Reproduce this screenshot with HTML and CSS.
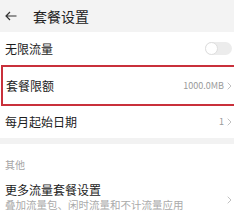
FILE: index.html
```html
<!DOCTYPE html>
<html lang="zh">
<head>
<meta charset="utf-8">
<link rel="stylesheet" href="styles.css">
</head>
<body>
<div class="screen">
  <header class="topbar">
    <svg class="back" width="12" height="10" viewBox="0 0 12 10"><path d="M11.5 5H1M5 1 1 5l4 4" fill="none" stroke="#333" stroke-width="1.2"/></svg>
    <span class="title">套餐设置</span>
  </header>
  <div class="row r1">
    <span class="label">无限流量</span>
    <span class="toggle"><span class="knob"></span></span>
  </div>
  <div class="row r2 marked">
    <span class="label">套餐限额</span>
    <span class="value">1000.0MB<svg class="chev" width="5" height="8" viewBox="0 0 5 8"><path d="M0.7 0.7 4 4 0.7 7.3" fill="none" stroke="#bbb" stroke-width="0.9"/></svg></span>
  </div>
  <div class="row r3">
    <span class="label">每月起始日期</span>
    <span class="value">1<svg class="chev" width="5" height="8" viewBox="0 0 5 8"><path d="M0.7 0.7 4 4 0.7 7.3" fill="none" stroke="#bbb" stroke-width="0.9"/></svg></span>
  </div>
  <div class="band"></div>
  <div class="section">其他</div>
  <div class="row r4">
    <div class="stack">
      <span class="label">更多流量套餐设置</span>
      <span class="sub">叠加流量包、闲时流量和不计流量应用</span>
    </div>
    <svg class="chev low" width="5" height="8" viewBox="0 0 5 8"><path d="M0.7 0.7 4 4 0.7 7.3" fill="none" stroke="#bbb" stroke-width="0.9"/></svg>
  </div>
</div>
</body>
</html>
```
FILE: styles.css
```css
* { box-sizing: border-box; }
html, body { margin: 0; padding: 0; background: #fff; }
body {
  font-family: "Noto Sans CJK SC", "Noto Sans", sans-serif;
  color: #1c1c1c;
  width: 234px;
  height: 224px;
  overflow: hidden;
}
.screen { width: 234px; }
.topbar {
  height: 32px;
  background: #f3f3f3;
  display: flex;
  align-items: center;
  padding-left: 5px;
}
.back { display: block; }
.title {
  margin-left: 16px;
  font-size: 14px;
  line-height: 16px;
  color: #222;
}
.row {
  display: flex;
  align-items: center;
  justify-content: space-between;
  padding: 0 2px 0 5px;
}
.label { font-size: 12px; line-height: 16px; color: #1c1c1c; }
.r1 { height: 33px; }
.r2 { height: 41px; }
.r3 { height: 32px; }
.marked {
  border: 2px solid #c9303b;
  border-right: none;
  margin-left: 1px;
  padding-left: 3px;
}
.toggle {
  width: 27px;
  height: 13px;
  border-radius: 7px;
  background: #ececec;
  display: flex;
  align-items: center;
}
.knob {
  width: 13px;
  height: 13px;
  border-radius: 50%;
  background: #fff;
  border: 1px solid #dedede;
}
.value {
  display: flex;
  align-items: center;
  gap: 3px;
  font-size: 9px;
  line-height: 12px;
  color: #9a9a9a;
}
.chev { display: block; }
.chev.low { margin-top: 6px; }
.band { height: 6px; background: #f2f2f2; }
.section {
  height: 35px;
  padding: 15px 0 0 5px;
  font-size: 10px;
  line-height: 12px;
  color: #a5a5a5;
}
.r4 { padding-top: 3px; }
.stack { display: flex; flex-direction: column; }
.sub { font-size: 10.5px; line-height: 14px; color: #aaa; }
```
